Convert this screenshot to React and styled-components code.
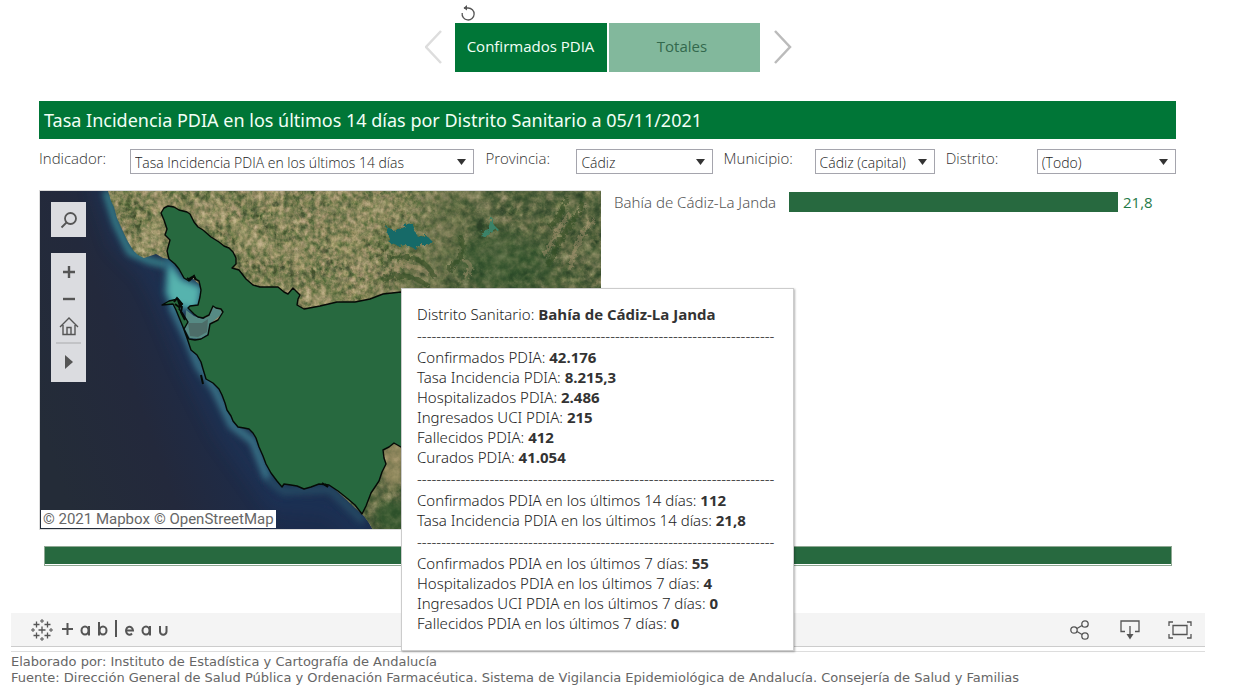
import React from "react";
import styled, { createGlobalStyle } from "styled-components";

const GlobalStyle = createGlobalStyle`
  * { box-sizing: border-box; }
  body {
    margin: 0;
    background: #fff;
    color: #444;
    font-family: "Open Sans", "Noto Sans", sans-serif;
    font-size: 15px;
    line-height: 20px;
  }
  button, select { font: inherit; color: inherit; }
`;

const Page = styled.main`
  padding: 4px 36px 0 11px;
`;

const StoryNav = styled.nav`
  display: flex;
  justify-content: center;
  align-items: center;
  gap: 12px;
`;

const Story = styled.div`
  display: flex;
  flex-direction: column;
  align-items: center;
`;

const IconButton = styled.button`
  display: flex;
  align-items: center;
  justify-content: center;
  width: ${(p) => p.$w || 20}px;
  height: ${(p) => p.$h || 20}px;
  padding: 0;
  border: 0;
  background: none;
  color: ${(p) => p.$color || "#555"};
`;

const ResetRow = styled.div`
  display: flex;
  width: 305px;
  height: 19px;
  padding-left: 3px;
`;

const Tabs = styled.div`
  display: flex;
  gap: 2px;
`;

const Tab = styled.button`
  width: ${(p) => (p.$active ? 152 : 151)}px;
  height: 49px;
  padding: 0 4px 4px 0;
  border: 0;
  background: ${(p) => (p.$active ? "#007637" : "#82b89c")};
  color: ${(p) => (p.$active ? "#f2fff6" : "#33694d")};
  ${(p) => p.$active && "padding-right: 0;"}
`;

const ArrowButton = styled(IconButton)`
  margin-top: 18px;
`;

const Dashboard = styled.section`
  padding: 29px 29px 0 28px;
`;

const Title = styled.h1`
  margin: 0;
  padding: 0 5px;
  background: #007637;
  color: #f2fff6;
  font-family: "Noto Sans", sans-serif;
  font-size: 18px;
  font-weight: 400;
  line-height: 38px;
`;

const Filters = styled.form`
  display: grid;
  grid-template-columns: 435fr 227fr 211fr 230fr;
  column-gap: 11px;
  padding-top: 10px;
`;

const Field = styled.div`
  display: grid;
  grid-template-columns: 91px 1fr;
`;

const FieldLabel = styled.label`
  font-weight: 300;
  line-height: 18px;
  color: #333;
`;

const SelectBox = styled.div`
  position: relative;
  color: #222;
  font-size: 14px;
  font-weight: 300;
`;

const Select = styled.select`
  appearance: none;
  display: block;
  width: 100%;
  height: 25px;
  padding: 3px 20px 0 4px;
  border: 1px solid #a5a5ad;
  border-radius: 0;
  background: #fff;
`;

const Caret = styled.svg`
  position: absolute;
  right: 8px;
  top: 10px;
  pointer-events: none;
`;

const Body = styled.div`
  position: relative;
  padding-top: 16px;
`;

const Charts = styled.div`
  display: grid;
  grid-template-columns: 562fr 575fr;
`;

const MapPanel = styled.div`
  position: relative;
  height: 340px;
  border: 1px solid #dcdcdc;
  border-right: 0;
  overflow: hidden;
`;

const MapDrawing = styled.svg`
  display: block;
  width: 100%;
  height: 100%;
`;

const MapTools = styled.div`
  position: absolute;
  top: 11px;
  left: 11px;
  display: flex;
  flex-direction: column;
  gap: 16px;
`;

const ToolGroup = styled.div`
  display: flex;
  flex-direction: column;
  align-items: center;
  width: 35px;
  padding: ${(p) => (p.$single ? 0 : 5)}px 0;
  background: #dbdce0;
`;

const ToolRule = styled.hr`
  width: 25px;
  height: 2px;
  margin: 2px 0 3px;
  border: 0;
  background: #c2c3c6;
`;

const Attribution = styled.div`
  position: absolute;
  left: 1px;
  bottom: 1px;
  display: flex;
  gap: 4px;
  height: 18px;
  padding: 0 2px;
  background: #fff;
  font-family: Roboto, "Liberation Sans", sans-serif;
  font-size: 15px;
  line-height: 18px;
`;

const PlainLink = styled.a`
  color: #666;
  text-decoration: none;
`;

const BarRow = styled.div`
  display: grid;
  grid-template-columns: 188px 1fr 58px;
  align-items: center;
  height: 20px;
  margin-top: 2px;
`;

const BarLabel = styled.span`
  padding-left: 13px;
  color: #555;
  font-family: "Noto Sans", sans-serif;
  font-weight: 300;
`;

const Bar = styled.div`
  height: 20px;
  background: #27693f;
`;

const BarValue = styled.span`
  padding-left: 5px;
  color: #1f7a48;
`;

const TotalBar = styled.div`
  height: 20px;
  margin: 16px 4px 0 5px;
  border: 1px solid #8fa893;
  background: #27693f;
  box-shadow: inset 0 -1px #fff;
`;

const Tooltip = styled.aside`
  position: absolute;
  left: 362px;
  top: 114px;
  width: 393px;
  padding: 15px 15px 17px;
  border: 1px solid #ccc;
  background: #fff;
  box-shadow: 1px 1px 2px rgba(0, 0, 0, 0.3);
  color: #222;
  font-family: "Noto Sans", sans-serif;
  font-weight: 300;
  white-space: nowrap;
`;

const TipLine = styled.div`
  height: 20px;
  b {
    color: #333;
    font-family: "Open Sans", sans-serif;
    font-weight: 700;
  }
`;

const TipRule = styled.div`
  height: 23px;
  line-height: 23px;
  overflow: hidden;
`;

const Toolbar = styled.footer`
  display: flex;
  align-items: center;
  justify-content: space-between;
  height: 34px;
  margin-top: 47px;
  padding: 0 12px 0 20px;
  border-bottom: 1px solid #ccc;
  background: #f4f4f4;
`;

const Brand = styled.a`
  display: flex;
  align-items: center;
  gap: 7px;
  color: #555;
`;

const Actions = styled.div`
  display: flex;
  gap: 24px;
`;

const Credits = styled.div`
  margin-top: 4px;
  padding-top: 2px;
  border-top: 1px solid #ddd;
  color: #666;
  font-family: "DejaVu Sans", sans-serif;
  font-size: 13px;
  line-height: 16px;
  p { margin: 0; }
`;

const DISTRICT =
  "M161 212L164 207L168 205L174 206L179 209L187 211L190 213L194 221L198 226L203 229L211 236L219 241L224 245L229 247L233 251L236 257L236 263L232 267L239 269L246 278L253 284L260 286L268 286L278 286L284 291L288 293L293 287L300 294L298 298L297 304L304 308L320 305L337 301L355 301L370 298L383 293L401 291L440 292L440 460L401 446L394 442L389 446L383 449L384 457L386 463L382 471L379 480L371 492L366 505L362 513L355 504L348 498L338 490L329 484L319 483L311 486L304 488L297 485L291 484L284 483L282 486L277 480L271 472L266 463L263 455L259 446L256 437L253 432L249 428L244 427L238 426L233 420L231 415L227 409L225 402L222 394L219 388L213 382L206 378L203 368L201 361L197 354L191 349L187 337L183 326L176 309L173 303L162 304L169 300L178 298L182 303L179 308L183 313L188 321L184 328L189 338L195 339L201 338L208 334L210 323L218 319L223 311L221 308L216 307L213 305L209 314L203 317L198 316L194 313L188 307L190 305L198 304L200 296L201 289L199 280L195 278L194 275L190 277L189 280L184 277L179 268L175 263L169 258L167 250L170 239L165 234L167 228L164 219Z";

function SatelliteMap() {
  return (
    <MapDrawing viewBox="40 190 561 339" preserveAspectRatio="xMinYMin slice" role="img" aria-label="Mapa del distrito Bahía de Cádiz-La Janda">
      <defs>
        <linearGradient id="sea" x1="40" y1="430" x2="230" y2="360" gradientUnits="userSpaceOnUse">
          <stop offset="0" stopColor="#242c38" />
          <stop offset="0.5" stopColor="#23293c" />
          <stop offset="1" stopColor="#1c2c4c" />
        </linearGradient>
        <linearGradient id="hills" x1="385" y1="225" x2="480" y2="255" gradientUnits="userSpaceOnUse">
          <stop offset="0" stopColor="#000" />
          <stop offset="0.9" stopColor="#fff" />
        </linearGradient>
        <mask id="hillMask" maskUnits="userSpaceOnUse" x="40" y="190" width="561" height="339">
          <rect x="40" y="190" width="561" height="339" fill="url(#hills)" />
        </mask>
        <clipPath id="land">
          <path d="M108 190L111 200L114 206L117 217L121 226L127 239L133 249L138 254L144 257L150 255L156 253L163 257L169 258L190 275L201 285L200 305L240 400L364 515L369 522L373 529H601V190Z" />
        </clipPath>
        <filter id="farm" x="0" y="0" width="1" height="1" colorInterpolationFilters="sRGB">
          <feTurbulence type="fractalNoise" baseFrequency="0.035" numOctaves="3" seed="8" result="broad" />
          <feTurbulence type="fractalNoise" baseFrequency="0.19 0.17" numOctaves="4" seed="31" result="fine" />
          <feComposite in="fine" in2="broad" operator="arithmetic" k2="1.05" k3="0.4" k4="-0.13" />
          <feColorMatrix values="1 0 0 0 0  0.86 0.14 0 0 0  0.92 0 0.08 0 0  0 0 0 0 1" />
          <feComponentTransfer>
            <feFuncR type="table" tableValues="0.26 0.32 0.43 0.55 0.66 0.74 0.82 0.88" />
            <feFuncG type="table" tableValues="0.3 0.36 0.46 0.54 0.63 0.7 0.77 0.82" />
            <feFuncB type="table" tableValues="0.17 0.22 0.29 0.37 0.46 0.54 0.62 0.68" />
          </feComponentTransfer>
        </filter>
        <filter id="forest" x="0" y="0" width="1" height="1" colorInterpolationFilters="sRGB">
          <feTurbulence type="fractalNoise" baseFrequency="0.045" numOctaves="3" seed="21" result="broad" />
          <feTurbulence type="fractalNoise" baseFrequency="0.13" numOctaves="5" seed="14" result="fine" />
          <feComposite in="fine" in2="broad" operator="arithmetic" k2="0.85" k3="0.5" k4="-0.13" />
          <feColorMatrix values="1 0 0 0 0  0.9 0.1 0 0 0  0.94 0 0.06 0 0  0 0 0 0 1" />
          <feComponentTransfer>
            <feFuncR type="table" tableValues="0.18 0.22 0.29 0.39 0.5 0.6 0.67 0.74" />
            <feFuncG type="table" tableValues="0.25 0.3 0.36 0.43 0.52 0.6 0.66 0.7" />
            <feFuncB type="table" tableValues="0.15 0.18 0.22 0.28 0.36 0.45 0.52 0.57" />
          </feComponentTransfer>
        </filter>
        <filter id="rough" x="-0.2" y="-0.2" width="1.4" height="1.4">
          <feTurbulence type="fractalNoise" baseFrequency="0.3" numOctaves="2" seed="3" />
          <feDisplacementMap in="SourceGraphic" scale="7" />
        </filter>
        <filter id="soft3" x="-0.5" y="-0.5" width="2" height="2"><feGaussianBlur stdDeviation="3" /></filter>
        <filter id="soft8" x="-0.5" y="-0.5" width="2" height="2"><feGaussianBlur stdDeviation="8" /></filter>
      </defs>

      <rect x="40" y="190" width="561" height="339" fill="url(#sea)" />
      <path d="M100 180L120 240L150 270L165 300L190 360L225 430L275 500L330 505L370 540" fill="none" stroke="#1a3760" strokeWidth="20" opacity="0.4" filter="url(#soft8)" />
      <path d="M106 190L116 222L130 251L150 260L168 264" fill="none" stroke="#3b8f96" strokeWidth="7" opacity="0.85" filter="url(#soft3)" />
      <path d="M168 258L182 278L202 286L198 310L172 305L166 292Z" fill="#57b3ae" stroke="#2d7188" strokeWidth="4" filter="url(#soft3)" />
      <path d="M172 305L188 338L199 365L215 388L232 424L253 440L268 478" fill="none" stroke="#4592a2" strokeWidth="8" opacity="0.7" filter="url(#soft3)" />
      <path d="M268 478L284 490L330 488L364 520" fill="none" stroke="#2a5a70" strokeWidth="9" opacity="0.6" filter="url(#soft3)" />

      <g clipPath="url(#land)">
        <rect x="40" y="190" width="561" height="339" filter="url(#farm)" />
        <g mask="url(#hillMask)">
          <rect x="40" y="190" width="561" height="339" filter="url(#forest)" />
        </g>
        <ellipse cx="505" cy="262" rx="50" ry="28" fill="#2c5229" opacity="0.45" filter="url(#soft8)" />
        <ellipse cx="395" cy="515" rx="20" ry="15" fill="#2c5229" opacity="0.65" filter="url(#soft3)" />
        <ellipse cx="394" cy="462" rx="14" ry="24" fill="#b39b70" opacity="0.5" filter="url(#soft3)" />
        <g fill="none" stroke="#b39b78" strokeWidth="4" opacity="0.4" filter="url(#rough)">
          <path d="M386 270C400 262 418 263 428 273M462 258C472 262 474 268 464 276" />
          <path d="M570 212C558 226 552 241 544 255M595 218C582 230 574 246 570 269" />
        </g>
        <g fill="none" stroke="#345028" strokeWidth="5" opacity="0.6" filter="url(#rough)">
          <path d="M388 257C410 254 425 256 435 277M382 279C402 269 416 277 430 286M448 270C460 258 468 250 460 235" />
          <path d="M567 196C562 210 558 220 549 226M584 202C570 225 557 240 548 266" />
        </g>
        <path d="M386 225L392 229L403 227L407 223L414 222L415 230L418 236L427 235L433 241L428 244L419 244L415 248L408 244L398 245L390 242L389 235Z" fill="#176b68" filter="url(#rough)" />
        <path d="M492 215L494 224L498 228L491 232L484 236L480 234L488 228Z" fill="#3a8268" filter="url(#rough)" />
      </g>

      <path d="M186 309L194 315L203 318L209 315L213 306L221 309L222 313L210 323L208 333L200 338L190 337L185 328Z" fill="#568a84" />
      <path d="M188 322L202 322L208 318L207 331L198 336L190 335Z" fill="#4d6d69" />
      <path d={DISTRICT} fill="#27693f" stroke="#050a06" strokeWidth="1.4" strokeLinejoin="round" />
      <path d="M174 301L177 297L182 303L179 306L175 303M178 299L180 305M187 277L190 279L194 275L196 279M182 305L181 311L185 319M322 482L328 486L325 483M201 374L203 383" fill="none" stroke="#050a06" strokeWidth="2" />
    </MapDrawing>
  );
}

function Filter({ id, label, value }) {
  return (
    <Field>
      <FieldLabel htmlFor={id}>{label}</FieldLabel>
      <SelectBox>
        <Select id={id} defaultValue={value}>
          <option>{value}</option>
        </Select>
        <Caret width="9" height="6" viewBox="0 0 9 6" aria-hidden="true">
          <path d="M0 0H9L4.500 6Z" fill="#333" />
        </Caret>
      </SelectBox>
    </Field>
  );
}

const TIP_GROUPS = [
  [["Distrito Sanitario", "Bahía de Cádiz-La Janda"]],
  [
    ["Confirmados PDIA", "42.176"],
    ["Tasa Incidencia PDIA", "8.215,3"],
    ["Hospitalizados PDIA", "2.486"],
    ["Ingresados UCI PDIA", "215"],
    ["Fallecidos PDIA", "412"],
    ["Curados PDIA", "41.054"],
  ],
  [
    ["Confirmados PDIA en los últimos 14 días", "112"],
    ["Tasa Incidencia PDIA en los últimos 14 días", "21,8"],
  ],
  [
    ["Confirmados PDIA en los últimos 7 días", "55"],
    ["Hospitalizados PDIA en los últimos 7 días", "4"],
    ["Ingresados UCI PDIA en los últimos 7 días", "0"],
    ["Fallecidos PDIA en los últimos 7 días", "0"],
  ],
];

function TableauLogo() {
  return (
    <svg width="22" height="22" viewBox="0 0 22 22" fill="none" stroke="#555" aria-hidden="true">
      <path d="M11 7.500V14.500M7.500 11H14.500M5.500 2.500V8.500M2.500 5.500H8.500M16.500 2.500V8.500M13.500 5.500H19.500M5.500 13.500V19.500M2.500 16.500H8.500M16.500 13.500V19.500M13.500 16.500H19.500" strokeWidth="1.300" />
      <path d="M11 0V4M9 2H13M11 18V22M9 20H13M2 9V13M0 11H4M20 9V13M18 11H22" strokeWidth="1" />
    </svg>
  );
}

function TableauWordmark() {
  return (
    <svg width="110" height="20" viewBox="0 0 110 20" fill="none" stroke="#555" strokeWidth="2" role="img" aria-label="tableau">
      <path d="M7.500 3V15M2 9H13M56 0V17" />
      <ellipse cx="25" cy="10.500" rx="3.500" ry="4" />
      <path d="M29 6V15.500M39 2V15.500" />
      <ellipse cx="43" cy="10.500" rx="3.500" ry="4" />
      <path d="M66 10.500H73A3.500 4 0 1 0 72 13.500" />
      <ellipse cx="86" cy="10.500" rx="3.500" ry="4" />
      <path d="M90 6V15.500M100 6V11.500A3.200 3.200 0 0 0 106.500 11.500V6" />
    </svg>
  );
}

export default function App() {
  return (
    <>
      <GlobalStyle />
      <Page>
        <StoryNav>
          <ArrowButton type="button" aria-label="Anterior" $w={18} $h={34} $color="#ddd">
            <svg width="18" height="34" viewBox="0 0 18 34" fill="none" stroke="currentColor" strokeWidth="2.500">
              <path d="M16 1L1 17L16 33" />
            </svg>
          </ArrowButton>
          <Story>
            <ResetRow>
              <IconButton type="button" aria-label="Restablecer" $h={17}>
                <svg width="16" height="16" viewBox="0 0 16 16" fill="none" stroke="currentColor" strokeWidth="1.300">
                  <path d="M2.200 8A6 6 0 1 0 8 3H4" />
                  <path d="M7 0L3.500 3L7 5.500Z" fill="currentColor" stroke="none" />
                </svg>
              </IconButton>
            </ResetRow>
            <Tabs>
              <Tab type="button" $active>Confirmados PDIA</Tab>
              <Tab type="button">Totales</Tab>
            </Tabs>
          </Story>
          <ArrowButton type="button" aria-label="Siguiente" $w={20} $h={34} $color="#bbb">
            <svg width="20" height="34" viewBox="0 0 20 34" fill="none" stroke="currentColor" strokeWidth="2.500">
              <path d="M3 1L18 17L3 33" />
            </svg>
          </ArrowButton>
        </StoryNav>

        <Dashboard>
          <Title>Tasa Incidencia PDIA en los últimos 14 días por Distrito Sanitario a 05/11/2021</Title>
          <Filters>
            <Filter id="indicador" label="Indicador:" value="Tasa Incidencia PDIA en los últimos 14 días" />
            <Filter id="provincia" label="Provincia:" value="Cádiz" />
            <Filter id="municipio" label="Municipio:" value="Cádiz (capital)" />
            <Filter id="distrito" label="Distrito:" value="(Todo)" />
          </Filters>
          <Body>
            <Charts>
              <MapPanel>
                <SatelliteMap />
                <MapTools>
                  <ToolGroup $single>
                    <IconButton type="button" aria-label="Buscar" $w={35} $h={35}>
                      <svg width="18" height="18" viewBox="0 0 18 18" fill="none" stroke="currentColor" strokeWidth="1.800">
                        <circle cx="10.500" cy="7.500" r="5.500" />
                        <path d="M6.500 11.500L1.500 16.500" />
                      </svg>
                    </IconButton>
                  </ToolGroup>
                  <ToolGroup>
                    <IconButton type="button" aria-label="Acercar" $w={35} $h={27}>
                      <svg width="14" height="14" viewBox="0 0 14 14" stroke="currentColor" strokeWidth="2.400">
                        <path d="M7 1V13M1 7H13" />
                      </svg>
                    </IconButton>
                    <IconButton type="button" aria-label="Alejar" $w={35} $h={27}>
                      <svg width="14" height="14" viewBox="0 0 14 14" stroke="currentColor" strokeWidth="2.400">
                        <path d="M1 7H13" />
                      </svg>
                    </IconButton>
                    <IconButton type="button" aria-label="Inicio" $w={35} $h={28}>
                      <svg width="20" height="20" viewBox="0 0 20 20" fill="none" stroke="currentColor" strokeWidth="1.400">
                        <path d="M1 11L10 2L19 11M4 9V18.500H16V9M8 18V11.500H12V18" />
                      </svg>
                    </IconButton>
                    <ToolRule />
                    <IconButton type="button" aria-label="Más herramientas" $w={35} $h={30}>
                      <svg width="10" height="14" viewBox="0 0 10 14" fill="currentColor">
                        <path d="M1 0L9 7L1 14Z" />
                      </svg>
                    </IconButton>
                  </ToolGroup>
                </MapTools>
                <Attribution>
                  <PlainLink href="#mapbox">© 2021 Mapbox</PlainLink>
                  <PlainLink href="#osm">© OpenStreetMap</PlainLink>
                </Attribution>
              </MapPanel>
              <BarRow>
                <BarLabel>Bahía de Cádiz-La Janda</BarLabel>
                <Bar />
                <BarValue>21,8</BarValue>
              </BarRow>
            </Charts>
            <TotalBar />
            <Tooltip role="tooltip">
              {TIP_GROUPS.map((group, i) => (
                <React.Fragment key={i}>
                  {i > 0 && <TipRule>{"-".repeat(74)}</TipRule>}
                  {group.map(([name, value]) => (
                    <TipLine key={name}>{name}: <b>{value}</b></TipLine>
                  ))}
                </React.Fragment>
              ))}
            </Tooltip>
          </Body>
        </Dashboard>

        <Toolbar>
          <Brand href="#tableau" aria-label="Tableau">
            <TableauLogo />
            <TableauWordmark />
          </Brand>
          <Actions>
            <IconButton type="button" aria-label="Compartir" $w={26} $h={24}>
              <svg width="20" height="22" viewBox="0 0 20 22" fill="none" stroke="currentColor" strokeWidth="1.300">
                <circle cx="4" cy="11" r="3.200" /><circle cx="15" cy="5" r="3.200" /><circle cx="15" cy="17" r="3.200" />
                <path d="M7 9.500L12 6.500M7 12.500L12 15.500" />
              </svg>
            </IconButton>
            <IconButton type="button" aria-label="Descargar" $w={26} $h={24}>
              <svg width="20" height="20" viewBox="0 0 20 20" fill="none" stroke="currentColor" strokeWidth="1.300">
                <path d="M5 11.500H1V1H19V11.500H15M10 6V16" />
                <path d="M6.500 14H13.500L10 19.500Z" fill="currentColor" stroke="none" />
              </svg>
            </IconButton>
            <IconButton type="button" aria-label="Pantalla completa" $w={26} $h={24}>
              <svg width="24" height="18" viewBox="0 0 24 18" fill="none" stroke="currentColor" strokeWidth="1.300">
                <path d="M1 5V1H5M19 1H23V5M23 13V17H19M5 17H1V13M5 4.500H19V13.500H5Z" />
              </svg>
            </IconButton>
          </Actions>
        </Toolbar>
        <Credits>
          <p>Elaborado por: Instituto de Estadística y Cartografía de Andalucía</p>
          <p>Fuente: Dirección General de Salud Pública y Ordenación Farmacéutica. Sistema de Vigilancia Epidemiológica de Andalucía. Consejería de Salud y Familias</p>
        </Credits>
      </Page>
    </>
  );
}
